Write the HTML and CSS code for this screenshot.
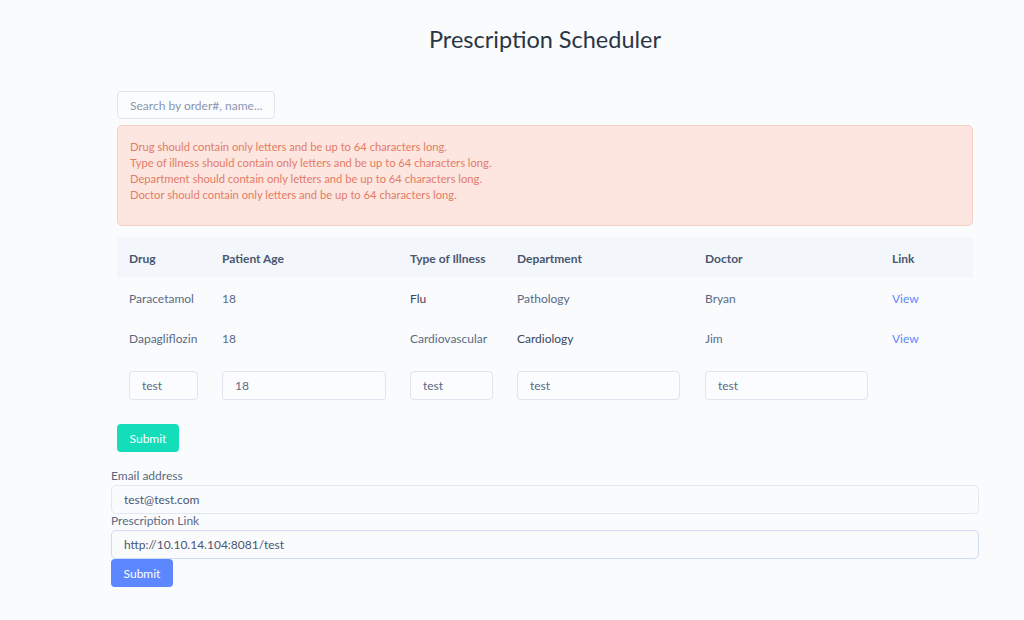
FILE: index.html
```html
<!DOCTYPE html>
<html>
<head>
<meta charset="utf-8">
<link rel="stylesheet" href="styles.css">
</head>
<body>
<h1 class="title">Prescription Scheduler</h1>
<div class="container">
  <input class="search" type="text" placeholder="Search by order#, name...">
  <div class="alert">
    <div>Drug should contain only letters and be up to 64 characters long.</div>
    <div>Type of illness should contain only letters and be up to 64 characters long.</div>
    <div>Department should contain only letters and be up to 64 characters long.</div>
    <div>Doctor should contain only letters and be up to 64 characters long.</div>
  </div>
  <table class="table">
    <colgroup>
      <col class="c-drug"><col class="c-age"><col class="c-type"><col class="c-dept"><col class="c-doc"><col class="c-link">
    </colgroup>
    <thead>
      <tr><th>Drug</th><th>Patient Age</th><th>Type of Illness</th><th>Department</th><th>Doctor</th><th>Link</th></tr>
    </thead>
    <tbody>
      <tr><td>Paracetamol</td><td>18</td><td class="dark">Flu</td><td>Pathology</td><td>Bryan</td><td><a class="view" href="#">View</a></td></tr>
      <tr><td>Dapagliflozin</td><td>18</td><td>Cardiovascular</td><td class="dark">Cardiology</td><td>Jim</td><td><a class="view" href="#">View</a></td></tr>
      <tr class="input-row">
        <td><input class="cell-input w-drug" value="test"></td>
        <td><input class="cell-input w-age" value="18"></td>
        <td><input class="cell-input w-type" value="test"></td>
        <td><input class="cell-input w-dept" value="test"></td>
        <td><input class="cell-input w-doc" value="test"></td>
        <td></td>
      </tr>
    </tbody>
  </table>
  <button class="btn btn-green">Submit</button>
</div>
<form class="share">
  <label class="lbl">Email address</label>
  <input class="wide-input" value="test@test.com">
  <label class="lbl">Prescription Link</label>
  <input class="wide-input link-input" value="http://10.10.14.104:8081/test">
  <button type="button" class="btn btn-blue">Submit</button>
</form>
</body>
</html>
```
FILE: styles.css
```css
* { box-sizing: border-box; }
body {
  margin: 0;
  background: #f9fbfc;
  font-family: "Lato", "Liberation Sans", sans-serif;
  color: #5a6a85;
  font-size: 12px;
}
.title {
  margin: 0;
  padding-top: 25px;
  height: 91px;
  text-align: center;
  font-size: 23.5px;
  font-weight: 400;
  color: #2a3547;
  padding-left: 66px;
}
.container {
  margin: 0 51px 0 117px;
  display: flex;
  flex-direction: column;
  align-items: flex-start;
}
.search {
  width: 158px;
  height: 28px;
  border: 1px solid #dfe5ef;
  border-radius: 4px;
  background: #fbfcfd;
  padding: 0 12px;
  font-family: inherit;
  font-size: 12px;
  color: #5a6a85;
}
.search::placeholder { color: #8a97b1; }
.alert {
  margin-top: 6px;
  width: 100%;
  height: 101px;
  background: #fde5e0;
  border: 1px solid #f8cdc4;
  border-radius: 5px;
  padding: 13px 12px;
  color: #e27d66;
  font-size: 11.2px;
  line-height: 16px;
}
.table {
  margin-top: 12px;
  width: 100%;
  border-collapse: collapse;
  table-layout: fixed;
}
.c-drug { width: 93px; }
.c-age { width: 188px; }
.c-type { width: 107px; }
.c-dept { width: 188px; }
.c-doc { width: 187px; }
.c-link { width: 93px; }
.table th {
  background: #f3f7fb;
  height: 40px;
  text-align: left;
  font-weight: 700;
  color: #4a5670;
  font-size: 12px;
  padding: 0 12px;
}
.table td {
  height: 40px;
  padding: 0 12px;
  font-size: 12px;
  color: #5a6a85;
  white-space: nowrap;
}
.table td.dark { color: #3a465e; }
.input-row td { height: 54px; }
.view { color: #5d87ff; text-decoration: none; }
.cell-input {
  height: 29px;
  border: 1px solid #dfe5ef;
  border-radius: 4px;
  background: #fbfcfd;
  padding: 0 12px;
  font-family: inherit;
  font-size: 12px;
  color: #5a6a85;
  display: block;
}
.w-drug { width: 69px; }
.w-age { width: 164px; }
.w-type { width: 83px; }
.w-dept { width: 163px; }
.w-doc { width: 163px; }
.btn {
  border: none;
  border-radius: 4px;
  color: #fff;
  font-family: inherit;
  font-size: 12px;
  width: 62px;
  height: 28px;
  padding: 0;
}
.btn-green { background: #13deb9; margin-top: 12px; }
.btn-blue { background: #5d87ff; }
.share {
  margin: 17px 45px 0 111px;
  display: flex;
  flex-direction: column;
  align-items: flex-start;
}
.lbl {
  font-size: 12px;
  color: #5a6a85;
  line-height: 14px;
  margin-bottom: 2px;
}
.wide-input {
  width: 100%;
  height: 29px;
  border: 1px solid #e2e8f2;
  border-radius: 5px;
  background: #fafbfc;
  padding: 0 12px;
  font-family: inherit;
  font-size: 12px;
  color: #4a5670;
}
.link-input { border-color: #cfdcf8; }
```
